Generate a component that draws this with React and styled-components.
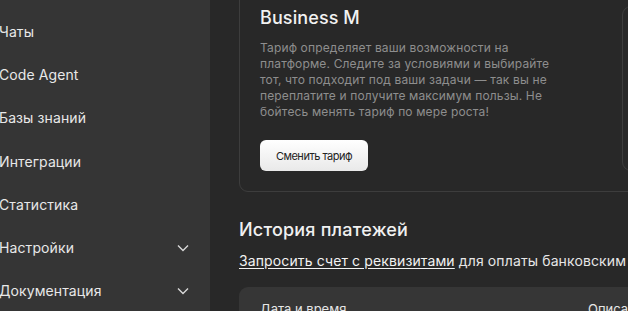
import styled, { createGlobalStyle } from "styled-components";

const GlobalStyle = createGlobalStyle`
  body {
    margin: 0;
    background: #282828;
    font-family: Inter, "Noto Sans", sans-serif;
    overflow: hidden;
  }
`;

const Layout = styled.div`
  display: flex;
  width: 628px;
  height: 311px;
  overflow: hidden;
`;

const Sidebar = styled.nav`
  flex: 0 0 210px;
  background: #353535;
  padding: 10px 20px 0 0;
  box-sizing: border-box;
  display: flex;
  flex-direction: column;
`;

const NavItem = styled.div`
  height: 43.2px;
  flex-shrink: 0;
  display: flex;
  align-items: center;
  justify-content: space-between;
  color: #e8e8e8;
  font-size: 14px;
  letter-spacing: 0.1px;
  margin-left: -1px;
`;

const Chevron = () => (
  <svg width="14" height="14" viewBox="0 0 14 14" fill="none">
    <path d="M2 4.5 L7 9.5 L12 4.5" stroke="#d8d8d8" strokeWidth="1.4" />
  </svg>
);

const Main = styled.main`
  flex: 1;
  min-width: 0;
  overflow: hidden;
`;

const Content = styled.div`
  width: 900px;
  padding: 0 0 0 29px;
  margin-top: -15px;
`;

const Card = styled.section`
  border: 1px solid #3d3d3d;
  border-radius: 9px;
  padding: 20px;
  display: flex;
  gap: 16px;
`;

const Info = styled.div`
  flex: 0 0 346px;
  display: flex;
  flex-direction: column;
  align-items: flex-start;
`;

const Title = styled.h2`
  margin: 0;
  font-size: 18px;
  line-height: 24px;
  font-weight: 500;
  color: #f2f2f2;
  letter-spacing: 0.1px;
`;

const Desc = styled.p`
  margin: 10px 0 20px;
  max-width: 305px;
  font-size: 12px;
  line-height: 16px;
  letter-spacing: 0.15px;
  color: #8e8e8e;
`;

const Button = styled.button`
  width: 108px;
  height: 31px;
  border: none;
  border-radius: 6px;
  background: linear-gradient(#ffffff, #e9e9e9);
  color: #222;
  font-family: inherit;
  font-size: 11px;
  letter-spacing: -0.5px;
`;

const PlanBox = styled.div`
  flex: 1;
  border: 1px solid #3d3d3d;
  border-radius: 9px;
`;

const Heading = styled.h3`
  margin: 26px 0 0;
  font-size: 18px;
  line-height: 24px;
  font-weight: 500;
  letter-spacing: 0.2px;
  color: #f0f0f0;
`;

const Note = styled.p`
  margin: 9px 0 0;
  font-size: 14px;
  line-height: 20px;
  letter-spacing: 0.12px;
  color: #e6e6e6;
  white-space: nowrap;

  a {
    color: #f2f2f2;
    text-decoration: underline;
    text-underline-offset: 2px;
  }
`;

const Table = styled.div`
  margin-top: 16px;
  background: #363636;
  border-radius: 9px 9px 0 0;
  display: grid;
  grid-template-columns: 328px 1fr;
  padding: 14px 21px;
  font-size: 13px;
  color: #e6e6e6;
`;

const App = () => {
  const nav = [
    ["Чаты"],
    ["Code Agent"],
    ["Базы знаний"],
    ["Интеграции"],
    ["Статистика"],
    ["Настройки", true],
    ["Документация", true],
  ];
  return (
    <Layout>
      <GlobalStyle />
      <Sidebar>
        {nav.map(([label, sub]) => (
          <NavItem key={label}>
            {label}
            {sub && <Chevron />}
          </NavItem>
        ))}
      </Sidebar>
      <Main>
        <Content>
          <Card>
            <Info>
              <Title>Business M</Title>
              <Desc>
                Тариф определяет ваши возможности на платформе. Следите за
                условиями и выбирайте тот, что подходит под ваши задачи — так
                вы не переплатите и получите максимум пользы. Не бойтесь
                менять тариф по мере роста!
              </Desc>
              <Button>Сменить тариф</Button>
            </Info>
            <PlanBox />
          </Card>
          <Heading>История платежей</Heading>
          <Note>
            <a href="#">Запросить счет с реквизитами</a> для оплаты банковским
            переводом
          </Note>
          <Table>
            <span>Дата и время</span>
            <span>Описание</span>
          </Table>
        </Content>
      </Main>
    </Layout>
  );
};

export default App;
